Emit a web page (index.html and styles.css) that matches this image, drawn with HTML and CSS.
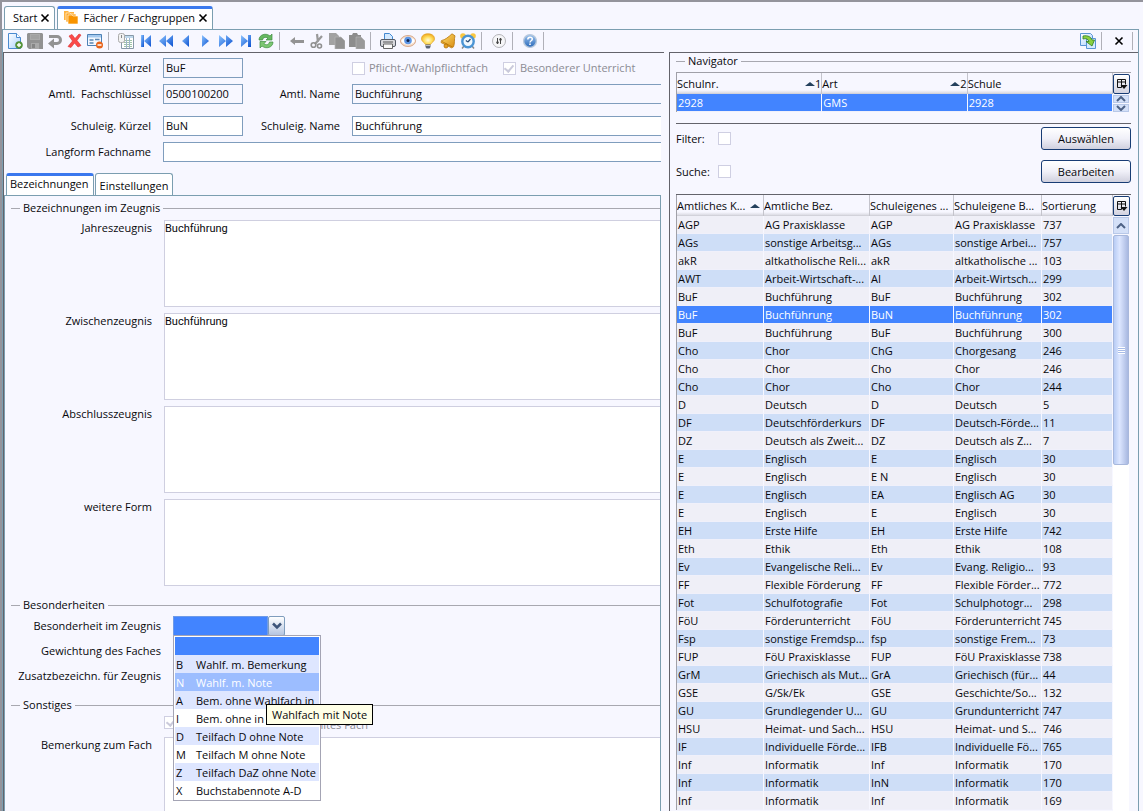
FILE: index.html
```html
<!DOCTYPE html>
<html lang="de">
<head>
<meta charset="utf-8">
<title>Fächer / Fachgruppen</title>
<link rel="stylesheet" href="styles.css">
</head>
<body>
<svg width="0" height="0" class="defs" aria-hidden="true">
  <defs>
    <linearGradient id="gBlue" x1="0" y1="0" x2="1" y2="1"><stop offset="0" stop-color="#8cc4ff"/><stop offset="1" stop-color="#0a50d0"/></linearGradient>
    <linearGradient id="gPaper" x1="0" y1="0" x2="1" y2="1"><stop offset="0" stop-color="#ffffff"/><stop offset="1" stop-color="#a8d0ff"/></linearGradient>
    <linearGradient id="gGold" x1="0" y1="0" x2="1" y2="1"><stop offset="0" stop-color="#ffe070"/><stop offset="1" stop-color="#d88a10"/></linearGradient>
    <radialGradient id="gBulb" cx=".5" cy=".6" r=".6"><stop offset="0" stop-color="#fffbe0"/><stop offset=".5" stop-color="#ffe060"/><stop offset="1" stop-color="#f0a820"/></radialGradient>
    <linearGradient id="gHelp" x1="0" y1="0" x2="0" y2="1"><stop offset="0" stop-color="#9cc4f0"/><stop offset="1" stop-color="#2a68b8"/></linearGradient>
    <symbol id="colctl" viewBox="0 0 12 12"><path d="M1.500 9.500v-8h8v5M1.500 9.500h4M1.500 4h8M5.500 1.500v8" fill="none" stroke="#111"/><path d="M4.500 7h7L8 11z" fill="#111"/></symbol>
  </defs>
</svg>
<div class="window">
  <nav class="doc-tabs">
    <a class="doc-tab" href="#start">Start <svg class="x" viewBox="0 0 8 8"><path d="M.5 .5l7 7M7.500 .5l-7 7"/></svg></a>
    <a class="doc-tab active" href="#faecher"><svg class="ico" viewBox="0 0 16 16"><path d="M1 1h4l1 1h5v8H1z" fill="#ffb340"/><path d="M3 3h4l1 1h5v8H3z" fill="#ffa722" stroke="#fff" stroke-width=".6"/><path d="M5 5h4l1 1h5v8H5z" fill="#f99400" stroke="#fff" stroke-width=".6"/></svg>Fächer / Fachgruppen <svg class="x" viewBox="0 0 8 8"><path d="M.5 .5l7 7M7.500 .5l-7 7"/></svg></a>
  </nav>
  <div class="frame">
    <div class="toolbar">
      <button aria-label="Neu"><svg viewBox="0 0 16 16"><path d="M1.500.5h8l4 4v11h-12z" fill="url(#gPaper)" stroke="#4a8ad0"/><path d="M9.500.5v4h4" fill="#fff" stroke="#4a8ad0"/><circle cx="12" cy="12" r="3.500" fill="#5a9a3c" stroke="#3d7a28" stroke-width=".5"/><path d="M12 10v4M10 12h4" stroke="#fff" stroke-width="1.400"/></svg></button>
      <button aria-label="Speichern" disabled><svg viewBox="0 0 16 16"><path d="M0 1l1-1h14l1 1v15H2l-2-2z" fill="#929292"/><path d="M3 1h10v6H3z" fill="#aaa"/><path d="M4 3h8M4 5h8" stroke="#999"/><path d="M4 10h8v6H4z" fill="#a9a9a9"/><path d="M5 11h3v4H5z" fill="#858585"/></svg></button>
      <button aria-label="Rückgängig" disabled><svg viewBox="0 0 16 16"><path d="M2 3.500h8a3.500 3.500 0 0 1 0 7H6" fill="none" stroke="#939393" stroke-width="3"/><path d="M1 10.500l6-5v10z" fill="#939393"/></svg></button>
      <button aria-label="Löschen"><svg viewBox="0 0 16 16"><path d="M2 3l3-1.500 3 4 4-4.500 2 1-4 5.500 4 5-3 1.500-3.500-4L4 14.500l-3-1L5.500 8z" fill="#fb4949" stroke="#d83030" stroke-width=".6"/></svg></button>
      <button aria-label="Formular leeren"><svg viewBox="0 0 16 16"><path d="M.5 1.500h14v11H.5z" fill="#f6f9ff" stroke="#4d81b5"/><path d="M1 2h13v2.500H1z" fill="#a4c8ee"/><path d="M2.500 7h4M2.500 10h4M8 6.500h4.500" stroke="#5b86b3" stroke-width="1.500"/><circle cx="12.500" cy="12" r="3.500" fill="#e8641c"/><path d="M10.500 12h4" stroke="#fff" stroke-width="1.500"/></svg></button>
      <i class="sep"></i>
      <button aria-label="Tabelle"><svg viewBox="0 0 16 16"><path d="M3.500 2.500h12v13h-12z" fill="#fff" stroke="#8799a8"/><path d="M4 3h11v2H4z" fill="#bfd8ec"/><path d="M6 7.500h8M6 9.500h8M6 11.500h8M6 13.500h8" stroke="#9fc4a8"/><path d="M8.500 5v10M11.500 5v10" stroke="#9fb4cc"/><rect x=".5" y=".5" width="6" height="9" rx="2" fill="#f2f2f2" stroke="#aaa"/><path d="M3.500 2v3" stroke="#888"/></svg></button>
      <button aria-label="Erster"><svg viewBox="0 0 16 16"><path d="M3 2h3v12H3z" fill="url(#gBlue)"/><path d="M13 2v12L6 8z" fill="url(#gBlue)"/></svg></button>
      <button aria-label="Schnell zurück"><svg viewBox="0 0 16 16"><path d="M8 2v12L1 8zM15 2v12L8 8z" fill="url(#gBlue)"/></svg></button>
      <button aria-label="Zurück"><svg viewBox="0 0 16 16"><path d="M11 2v12L4 8z" fill="url(#gBlue)"/></svg></button>
      <button aria-label="Weiter"><svg viewBox="0 0 16 16"><path d="M4 2v12l7-6z" fill="url(#gBlue)"/></svg></button>
      <button aria-label="Schnell weiter"><svg viewBox="0 0 16 16"><path d="M1 2v12l7-6zM8 2v12l7-6z" fill="url(#gBlue)"/></svg></button>
      <button aria-label="Letzter"><svg viewBox="0 0 16 16"><path d="M3 2v12l7-6zM10 2h3v12h-3z" fill="url(#gBlue)"/></svg></button>
      <button aria-label="Aktualisieren"><svg viewBox="0 0 16 16"><path d="M1 7c0-5.500 7-7.500 11-4l2-2v6H8l2-2C8 4 5 4 4.500 7z" fill="#66b860" stroke="#3f8d42" stroke-width=".7"/><path d="M15 9c0 5.500-7 7.500-11 4l-2 2V8.500h6L6 10.500c2 2 5 1.500 5.500-1.500z" fill="#7cc772" stroke="#3f8d42" stroke-width=".7"/></svg></button>
      <i class="sep"></i>
      <button aria-label="Pfeil" disabled><svg viewBox="0 0 16 16"><path d="M1 8l5-4v3h9v3H6v2z" fill="#939393"/></svg></button>
      <button aria-label="Ausschneiden" disabled><svg viewBox="0 0 16 16"><path d="M8 1l1 8M13 3l-7 8" stroke="#999" stroke-width="2.200"/><circle cx="4.500" cy="12" r="2.300" fill="none" stroke="#909090" stroke-width="1.600"/><circle cx="10.500" cy="13" r="2" fill="none" stroke="#909090" stroke-width="1.600"/></svg></button>
      <button aria-label="Kopieren" disabled><svg viewBox="0 0 16 16"><path d="M0 0h7l3 3v9H0z" fill="#a2a2a2"/><path d="M6 4h6l4 4v8H6z" fill="#929292" stroke="#b4b4b4" stroke-width=".7"/></svg></button>
      <button aria-label="Einfügen" disabled><svg viewBox="0 0 16 16"><path d="M0 2h3l1-2h4l1 2h3v12H0z" fill="#8d8d8d"/><path d="M7 4h5l4 4v8H7z" fill="#999" stroke="#b4b4b4" stroke-width=".7"/></svg></button>
      <i class="sep"></i>
      <button aria-label="Drucken"><svg viewBox="0 0 16 16"><path d="M4.500 8V.5h5l3 3V8" fill="#d2e8ff" stroke="#4388d0"/><rect x=".5" y="6.500" width="15" height="7" rx="1.500" fill="#d9dade" stroke="#555b66"/><path d="M3 9h10" stroke="#555"/><path d="M3.500 11h9v4.500h-9z" fill="#fafafa" stroke="#666"/></svg></button>
      <button aria-label="Vorschau"><svg viewBox="0 0 16 16"><ellipse cx="8" cy="8" rx="7.500" ry="5.500" fill="#f3dccb" stroke="#d9ab8d"/><path d="M1 8c3-5 11-5 14 0-3 4.500-11 4.500-14 0z" fill="#fff"/><circle cx="8" cy="7.500" r="3.800" fill="#5d96e6"/><circle cx="8" cy="7.500" r="1.500" fill="#10244c"/></svg></button>
      <button aria-label="Hinweis"><svg viewBox="0 0 16 16"><path d="M8 .8c4 0 6.500 2 6.500 5 0 2.700-3 3.700-4 5.700h-5c-1-2-4-3-4-5.700 0-3 2.500-5 6.500-5z" fill="url(#gBulb)" stroke="#e0a020" stroke-width=".7"/><path d="M5.500 11.500h5V14l-1 1.500h-3l-1-1.500z" fill="#5c6474"/><path d="M6 12.500h4" stroke="#b8bcc8"/></svg></button>
      <button aria-label="Glocke"><svg viewBox="0 0 16 16"><path d="M12 .8l3 2c-1 3 0 8-1.500 11l-2 1L1 9.500l.5-2C5 7 8.500 4 12 .8z" fill="url(#gGold)" stroke="#b9770c" stroke-width=".8"/><path d="M2 8.500l10.500 5.500" stroke="#c57f0c"/><circle cx="6" cy="13" r="2" fill="#e8a020" stroke="#a86800" stroke-width=".7"/></svg></button>
      <button aria-label="Wecker"><svg viewBox="0 0 16 16"><circle cx="3" cy="3" r="2.800" fill="#f8c640"/><circle cx="13" cy="3" r="2.800" fill="#f8c640"/><path d="M4 13l-2 2.500M12 13l2 2.500" stroke="#888" stroke-width="1.500"/><circle cx="8" cy="8.500" r="5.700" fill="#f2f9ff" stroke="#4b94d4" stroke-width="2.400"/><path d="M8 9l2.500-3M8 9L5.800 7.500" stroke="#2a4e78" stroke-width="1.200"/></svg></button>
      <i class="sep"></i>
      <button aria-label="Einstellungen"><svg viewBox="0 0 16 16"><circle cx="8" cy="8" r="6.500" fill="#f6f6f8" stroke="#b4b4b8"/><path d="M6.500 5v6M9.500 5v6" stroke="#444"/><circle cx="6.500" cy="9.500" r="1.200" fill="#444"/><circle cx="9.500" cy="6.500" r="1.200" fill="#444"/></svg></button>
      <i class="sep"></i>
      <button aria-label="Hilfe"><svg viewBox="0 0 16 16"><circle cx="8" cy="8" r="6.400" fill="url(#gHelp)" stroke="#b9c9dc" stroke-width="1.400"/><path d="M5.800 6.500c0-3 4.500-3 4.500-.4C10.300 7.800 8 7.700 8 9.500" fill="none" stroke="#fff" stroke-width="1.500"/><path d="M8 10.500v1.600" stroke="#fff" stroke-width="1.600"/></svg></button>
      <i class="sep"></i>
      <span class="spring"></span>
      <button aria-label="Übernehmen"><svg viewBox="0 0 16 16"><path d="M.5.500h10l2 2v10H.5z" fill="url(#gPaper)" stroke="#5a94d4"/><path d="M6.500 5.500h9v10h-9z" fill="#d6ebff" stroke="#5a94d4"/><path d="M3 3c5-1 8 1 9 4h2.500L12 13 6 8.500h3C8 6 6 5 3 6z" fill="#8ad040" stroke="#2f7d20" stroke-width=".8"/></svg></button>
      <i class="sep"></i>
      <button aria-label="Schließen"><svg class="x" viewBox="0 0 8 8"><path d="M.5 .5l7 7M7.500 .5l-7 7"/></svg></button>
      <i class="sep last"></i>
    </div>
    <div class="split">
      <main class="editor">
        <form class="head-form">
          <div class="head-grid">
            <label for="ak">Amtl. Kürzel</label><input id="ak" class="txt ro" value="BuF" readonly>
            <div class="checks">
              <label class="chk"><input type="checkbox" disabled>Pflicht-/Wahlpflichtfach</label>
              <label class="chk"><input type="checkbox" checked disabled>Besonderer Unterricht</label>
            </div>
            <label for="af">Amtl.&nbsp; Fachschlüssel</label><input id="af" class="txt ro" value="0500100200" readonly>
            <label for="an">Amtl. Name</label><input id="an" class="txt ro open" value="Buchführung" readonly>
          </div>
          <div class="head-grid">
            <label for="sk">Schuleig. Kürzel</label><input id="sk" class="txt" value="BuN">
            <label for="sn">Schuleig. Name</label><input id="sn" class="txt open" value="Buchführung">
            <label for="lf">Langform Fachname</label><input id="lf" class="txt open wide" value="">
          </div>
        </form>
        <nav class="sub-tabs">
          <a class="sub-tab active" href="#bez">Bezeichnungen</a>
          <a class="sub-tab" href="#ein">Einstellungen</a>
        </nav>
        <section class="sub-panel">
          <h2 class="group">Bezeichnungen im Zeugnis</h2>
          <div class="notes">
            <label for="jz">Jahreszeugnis</label><textarea id="jz">Buchführung</textarea>
            <label for="zz">Zwischenzeugnis</label><textarea id="zz">Buchführung</textarea>
            <label for="az">Abschlusszeugnis</label><textarea id="az"></textarea>
            <label for="wf">weitere Form</label><textarea id="wf"></textarea>
          </div>
          <h2 class="group later">Besonderheiten</h2>
          <div class="specials">
            <label for="bz">Besonderheit im Zeugnis</label>
            <div class="combo">
              <select id="bz"><option></option></select>
              <span class="combo-arrow"><svg viewBox="0 0 10 8"><path d="M1 1.500l4 4 4-4" fill="none" stroke="#3d5479" stroke-width="2.500"/></svg></span>
              <ul class="popup" role="listbox">
                <li class="sel"></li>
                <li><b>B</b>Wahlf. m. Bemerkung</li>
                <li class="hover"><b>N</b>Wahlf. m. Note</li>
                <li><b>A</b>Bem. ohne Wahlfach in</li>
                <li><b>I</b>Bem. ohne in</li>
                <li><b>D</b>Teilfach D ohne Note</li>
                <li><b>M</b>Teilfach M ohne Note</li>
                <li><b>Z</b>Teilfach DaZ ohne Note</li>
                <li><b>X</b>Buchstabennote A-D</li>
              </ul>
              <div class="tip" role="tooltip">Wahlfach mit Note</div>
            </div>
            <span class="cap">Gewichtung des Faches</span><span></span>
            <span class="cap">Zusatzbezeichn. für Zeugnis</span><span></span>
          </div>
          <h2 class="group later">Sonstiges</h2>
          <div class="notes">
            <label class="chk misc"><input type="checkbox" checked disabled><span>ausgewähltes Fach</span></label>
            <label for="bf">Bemerkung zum Fach</label><textarea id="bf"></textarea>
          </div>
        </section>
      </main>
      <aside class="navigator">
        <h2 class="group">Navigator</h2>
        <div class="list schools">
          <table>
            <colgroup><col class="third"><col class="third"><col class="third"></colgroup>
            <thead><tr><th><div class="sort">Schulnr.<span><i class="up"></i>1</span></div></th><th><div class="sort">Art<span><i class="up"></i>2</span></div></th><th>Schule</th></tr></thead>
            <tbody><tr class="sel"><td>2928</td><td>GMS</td><td>2928</td></tr></tbody>
          </table>
          <div class="rail">
            <button class="colbtn" aria-label="Spalten"><svg><use href="#colctl"/></svg></button>
            <button class="step" aria-label="Auf"><svg viewBox="0 0 10 6"><path d="M1 5l4-4 4 4"/></svg></button>
            <button class="step" aria-label="Ab"><svg viewBox="0 0 10 6"><path d="M1 1l4 4 4-4"/></svg></button>
          </div>
        </div>
        <div class="filters">
          <div class="filter"><label for="fi">Filter:</label><input id="fi" type="checkbox"><button class="push">Auswählen</button></div>
          <div class="filter"><label for="su">Suche:</label><input id="su" type="checkbox"><button class="push">Bearbeiten</button></div>
        </div>
        <div class="list subjects">
          <table>
            <colgroup><col class="c1"><col class="c2"><col class="c3"><col class="c4"><col></colgroup>
            <thead><tr><th><div class="sort mid">Amtliches K...<span><i class="up"></i></span></div></th><th>Amtliche Bez.</th><th>Schuleigenes ...</th><th>Schuleigene B...</th><th>Sortierung</th></tr></thead>
            <tbody>
              <tr><td>AGP</td><td>AG Praxisklasse</td><td>AGP</td><td>AG Praxisklasse</td><td>737</td></tr>
              <tr><td>AGs</td><td>sonstige Arbeitsg...</td><td>AGs</td><td>sonstige Arbei...</td><td>757</td></tr>
              <tr><td>akR</td><td>altkatholische Reli...</td><td>akR</td><td>altkatholische ...</td><td>103</td></tr>
              <tr><td>AWT</td><td>Arbeit-Wirtschaft-...</td><td>AI</td><td>Arbeit-Wirtsch...</td><td>299</td></tr>
              <tr><td>BuF</td><td>Buchführung</td><td>BuF</td><td>Buchführung</td><td>302</td></tr>
              <tr class="sel"><td>BuF</td><td>Buchführung</td><td>BuN</td><td>Buchführung</td><td>302</td></tr>
              <tr><td>BuF</td><td>Buchführung</td><td>BuF</td><td>Buchführung</td><td>300</td></tr>
              <tr><td>Cho</td><td>Chor</td><td>ChG</td><td>Chorgesang</td><td>246</td></tr>
              <tr><td>Cho</td><td>Chor</td><td>Cho</td><td>Chor</td><td>246</td></tr>
              <tr><td>Cho</td><td>Chor</td><td>Cho</td><td>Chor</td><td>244</td></tr>
              <tr><td>D</td><td>Deutsch</td><td>D</td><td>Deutsch</td><td>5</td></tr>
              <tr><td>DF</td><td>Deutschförderkurs</td><td>DF</td><td>Deutsch-Förde...</td><td>11</td></tr>
              <tr><td>DZ</td><td>Deutsch als Zweit...</td><td>DZ</td><td>Deutsch als Z...</td><td>7</td></tr>
              <tr><td>E</td><td>Englisch</td><td>E</td><td>Englisch</td><td>30</td></tr>
              <tr><td>E</td><td>Englisch</td><td>E N</td><td>Englisch</td><td>30</td></tr>
              <tr><td>E</td><td>Englisch</td><td>EA</td><td>Englisch AG</td><td>30</td></tr>
              <tr><td>E</td><td>Englisch</td><td>E</td><td>Englisch</td><td>30</td></tr>
              <tr><td>EH</td><td>Erste Hilfe</td><td>EH</td><td>Erste Hilfe</td><td>742</td></tr>
              <tr><td>Eth</td><td>Ethik</td><td>Eth</td><td>Ethik</td><td>108</td></tr>
              <tr><td>Ev</td><td>Evangelische Reli...</td><td>Ev</td><td>Evang. Religio...</td><td>93</td></tr>
              <tr><td>FF</td><td>Flexible Förderung</td><td>FF</td><td>Flexible Förder...</td><td>772</td></tr>
              <tr><td>Fot</td><td>Schulfotografie</td><td>Fot</td><td>Schulphotogr...</td><td>298</td></tr>
              <tr><td>FöU</td><td>Förderunterricht</td><td>FöU</td><td>Förderunterricht</td><td>745</td></tr>
              <tr><td>Fsp</td><td>sonstige Fremdsp...</td><td>fsp</td><td>sonstige Frem...</td><td>73</td></tr>
              <tr><td>FUP</td><td>FöU Praxisklasse</td><td>FUP</td><td>FöU Praxisklasse</td><td>738</td></tr>
              <tr><td>GrM</td><td>Griechisch als Mut...</td><td>GrA</td><td>Griechisch (für...</td><td>44</td></tr>
              <tr><td>GSE</td><td>G/Sk/Ek</td><td>GSE</td><td>Geschichte/So...</td><td>132</td></tr>
              <tr><td>GU</td><td>Grundlegender U...</td><td>GU</td><td>Grundunterricht</td><td>747</td></tr>
              <tr><td>HSU</td><td>Heimat- und Sach...</td><td>HSU</td><td>Heimat- und S...</td><td>746</td></tr>
              <tr><td>IF</td><td>Individuelle Förde...</td><td>IFB</td><td>Individuelle Fö...</td><td>765</td></tr>
              <tr><td>Inf</td><td>Informatik</td><td>Inf</td><td>Informatik</td><td>170</td></tr>
              <tr><td>Inf</td><td>Informatik</td><td>InN</td><td>Informatik</td><td>170</td></tr>
              <tr><td>Inf</td><td>Informatik</td><td>Inf</td><td>Informatik</td><td>169</td></tr>
            </tbody>
          </table>
          <div class="rail">
            <button class="colbtn" aria-label="Spalten"><svg><use href="#colctl"/></svg></button>
            <button class="step tall" aria-label="Auf"><svg viewBox="0 0 10 6"><path d="M1 5l4-4 4 4"/></svg></button>
            <div class="track"><div class="thumb"><i class="grip"></i></div></div>
          </div>
        </div>
      </aside>
    </div>
  </div>
</div>
</body>
</html>
```
FILE: styles.css
```css
* { box-sizing: border-box; }
html, body { height: 100%; }
body {
  margin: 0;
  overflow: hidden;
  background: #f7f7ff;
  color: #08080c;
  font: 11px/16px "Open Sans", "Noto Sans", sans-serif;
}
input, textarea, select, button { font: inherit; color: inherit; margin: 0; }
button { padding: 0; }
a { color: inherit; text-decoration: none; }
.defs { position: absolute; }

.window {
  height: 100vh;
  display: flex;
  flex-direction: column;
  border-top: 2px solid #94949c;
  border-left: 2px solid #94949c;
  padding-right: 4px;
}

/* document tabs */
.doc-tabs { display: flex; gap: 2px; padding: 4px 0 0 2px; }
.doc-tab {
  display: flex;
  align-items: center;
  gap: 4px;
  height: 23px;
  padding: 0 5px 0 8px;
  background: #fff;
  border: 1px solid #7b9eb0;
  border-bottom: 0;
  border-radius: 3px 3px 0 0;
}
.doc-tab.active { border-top: 3px solid #3a78ee; padding-left: 5px; padding-bottom: 2px; }
.doc-tab .ico { width: 16px; height: 16px; }
.x { width: 8px; height: 8px; overflow: visible; }
.x path { stroke: #000; stroke-width: 1.6; fill: none; }

.frame {
  flex: 1;
  min-height: 0;
  display: flex;
  flex-direction: column;
  border: 1px solid #7b9eb0;
  border-bottom: 0;
}

/* toolbar */
.toolbar { display: flex; align-items: center; height: 22px; padding: 0 5px 0 2px; }
.toolbar button {
  width: 20px;
  height: 20px;
  display: grid;
  place-items: center;
  border: 0;
  background: none;
}
.toolbar svg { width: 16px; height: 16px; }
.toolbar svg.x { width: 8px; height: 8px; }
.sep { width: 1px; height: 18px; margin: 0 7px 0 3px; background: #b0b0b8; }
.sep.last { margin-right: 0; }
.spring { flex: 1; }

.split { flex: 1; min-height: 0; display: flex; gap: 5px; }
.editor {
  flex: 1;
  min-width: 0;
  display: flex;
  flex-direction: column;
  overflow: hidden;
  border-top: 1px solid #63636b;
  border-left: 1px solid #63636b;
  padding-right: 3px;
}

/* master data */
.head-form { display: grid; gap: 12px; padding-top: 5px; }
.head-grid {
  display: grid;
  grid-template-columns: 147px 80px 85px minmax(0, 1fr);
  grid-auto-rows: 20px;
  gap: 6px 12px;
  align-items: center;
}
.head-grid > label { text-align: right; white-space: nowrap; }
.txt {
  width: 100%;
  height: 20px;
  padding: 0 2px 2px;
  background: #fff;
  border: 1px solid #7f9dbd;
  outline: 0;
}
.ro { background: #f7f7ff; }
.open { border-right: 0; }
.wide { grid-column: 2 / -1; }
.checks { grid-column: 4; display: flex; gap: 15px; }
.chk { display: flex; align-items: center; gap: 4px; color: #8c8c94; white-space: nowrap; }
input[type="checkbox"] {
  appearance: none;
  flex: none;
  width: 13px;
  height: 13px;
  display: grid;
  place-items: center;
  background: #fff;
  border: 1px solid #cfcfe2;
}
input[type="checkbox"]:checked::after {
  content: "";
  width: 4px;
  height: 7px;
  margin-bottom: 2px;
  border: solid #cacadb;
  border-width: 0 2px 2px 0;
  transform: rotate(40deg);
}

/* inner tabs */
.sub-tabs { display: flex; gap: 1px; padding: 11px 0 0 2px; }
.sub-tab {
  height: 22px;
  padding: 3px 4px 0;
  line-height: 18px;
  background: #fff;
  border: 1px solid #7b9eb0;
  border-bottom: 0;
  border-radius: 3px 3px 0 0;
}
.sub-tab.active { border-top: 3px solid #3a78ee; padding: 0 4px 0 3px; line-height: 16px; }
.sub-panel {
  flex: 1;
  min-height: 0;
  padding-top: 4px;
  border: 1px solid #7b9eb0;
  border-bottom: 0;
}
.group {
  display: flex;
  align-items: center;
  gap: 3px;
  margin: 0 0 4px;
  padding-left: 6px;
  font-size: 11px;
  font-weight: 400;
  line-height: 16px;
}
.group::before, .group::after { content: ""; height: 1px; background: #a8a8b0; }
.group::before { width: 9px; }
.group::after { flex: 1; }
.group.later { margin-top: 11px; margin-bottom: 3px; }

.notes { display: grid; grid-template-columns: 147px minmax(0, 1fr); gap: 6px 12px; }
.notes > label { text-align: right; }
.notes textarea {
  display: block;
  width: 100%;
  height: 87px;
  padding: 0;
  resize: none;
  outline: 0;
  background: #fff;
  border: 1px solid #cfcfe0;
  border-right: 0;
  font-family: Roboto, "Open Sans", sans-serif;
  font-size: 11px;
  line-height: 15px;
}
.notes .misc { grid-column: 2; height: 15px; width: 204px; align-items: flex-start; }
.misc span { flex: 1; line-height: 18px; }

.specials {
  display: grid;
  grid-template-columns: 156px minmax(0, 1fr);
  grid-auto-rows: 20px;
  gap: 5px 12px;
  align-items: center;
  text-align: right;
  white-space: nowrap;
}
.combo { position: relative; display: flex; width: 112px; height: 20px; text-align: left; }
.combo select {
  appearance: none;
  flex: 1;
  min-width: 0;
  padding: 0;
  outline: 0;
  border: 1px solid #6e9ae8;
  border-radius: 0;
  background: #4284ff;
}
.combo-arrow {
  width: 17px;
  display: grid;
  place-items: center;
  border: 1px solid #7f9dbd;
  border-radius: 2px;
  background: linear-gradient(#fff, #b4c4e0);
}
.combo-arrow svg { width: 10px; height: 8px; }
.popup {
  position: absolute;
  z-index: 1;
  top: 19px;
  left: 0;
  width: 148px;
  margin: 0;
  padding: 1px;
  list-style: none;
  background: #fff;
  border: 1px solid #a4a4b4;
}
.popup li { height: 18px; line-height: 19px; padding-left: 1px; display: flex; }
.popup li:nth-child(even) { background: #dee6ff; }
.popup li.sel { background: #4284ff; }
.popup li.hover { background: #9cbdff; color: #fff; }
.popup b { font-weight: 400; width: 20px; }
.tip {
  position: absolute;
  z-index: 2;
  top: 88px;
  left: 93px;
  padding: 2px 5px;
  line-height: 15px;
  background: #ffffe7;
  border: 1px solid #000;
}

/* navigator */
.navigator {
  flex: 0 0 469px;
  min-width: 0;
  display: flex;
  flex-direction: column;
  overflow: hidden;
  border-top: 1px solid #63636b;
  border-left: 1px solid #63636b;
  padding: 0 7px 0 6px;
}
.navigator .group { margin: 0 0 3px; padding: 0; }
.list { display: flex; }
.list table {
  flex: 1;
  min-width: 0;
  width: 0;
  table-layout: fixed;
  border-collapse: separate;
  border-spacing: 0;
  border-left: 1px solid #a0a0a8;
}
.rail { width: 18px; flex: none; padding-top: 1px; display: flex; flex-direction: column; }
.schools { border-top: 1px solid #a0a0a8; }
.schools .third { width: 33%; }
.subjects { flex: 1; min-height: 0; overflow: hidden; align-items: stretch; }
.subjects table { align-self: flex-start; }
.c1 { width: 87px; }
.c2 { width: 106px; }
.c3 { width: 84px; }
.c4 { width: 88px; }
th, td { padding: 0; overflow: hidden; white-space: nowrap; text-align: left; font-weight: 400; }
th {
  height: 21px;
  line-height: 16px;
  background: linear-gradient(to top, #c8c8d0 0, #dcdce4 1px, #f7f7ff 4px);
  border-right: 1px solid #c4c4cc;
}
td {
  height: 18px;
  line-height: 17px;
  padding-left: 1px;
  border-right: 1px solid #f7f7ff;
  border-bottom: 1px solid #f0f0fa;
  background: #efeff7;
}
tbody tr:nth-child(even) td { background: #cedef7; }
tbody tr.sel td { background: #4284ff; color: #fff; }
.sort { display: flex; justify-content: space-between; }
.sort span { display: flex; align-items: center; }
.sort.mid span { padding-right: 3px; }
.up { border: solid transparent; border-width: 0 5px 4px; border-bottom-color: #24405c; }

.colbtn {
  height: 20px;
  width: 17px;
  display: grid;
  place-items: center;
  background: linear-gradient(#fff, #d2d2e0);
  border: 1px solid #183c74;
  border-radius: 2px;
}
.colbtn svg { width: 12px; height: 12px; }
.step {
  height: 8px;
  width: 16px;
  margin-top: 1px;
  display: grid;
  place-items: center;
  border: 1px solid #b8c8e8;
  background: #d4e0f8;
}
.step svg { width: 10px; height: 6px; }
.step path { fill: none; stroke: #4d6185; stroke-width: 2; }
.step.tall { height: 17px; }
.track { flex: 1; margin-top: 1px; width: 16px; background: #fff; }
.thumb {
  height: 230px;
  display: grid;
  place-items: center;
  border: 1px solid #a8b8dc;
  border-radius: 2px;
  background: linear-gradient(to right, #b8ccf4, #dce6ff 40%, #a8b8e0);
}
.grip { width: 7px; height: 7px; background: repeating-linear-gradient(#fff 0 1px, #a8bce8 1px 2px); }

.filters {
  display: grid;
  gap: 10px;
  margin-top: 11px;
  padding: 3px 0 11px;
  border-top: 1px solid #63636b;
  border-bottom: 1px solid #63636b;
}
.filter { display: flex; align-items: center; }
.filter label { width: 42px; }
.push {
  width: 90px;
  height: 23px;
  margin-left: auto;
  background: linear-gradient(#fff, #f0f0f8 50%, #d0d0de);
  border: 1px solid #183c74;
  border-radius: 3px;
}
```
